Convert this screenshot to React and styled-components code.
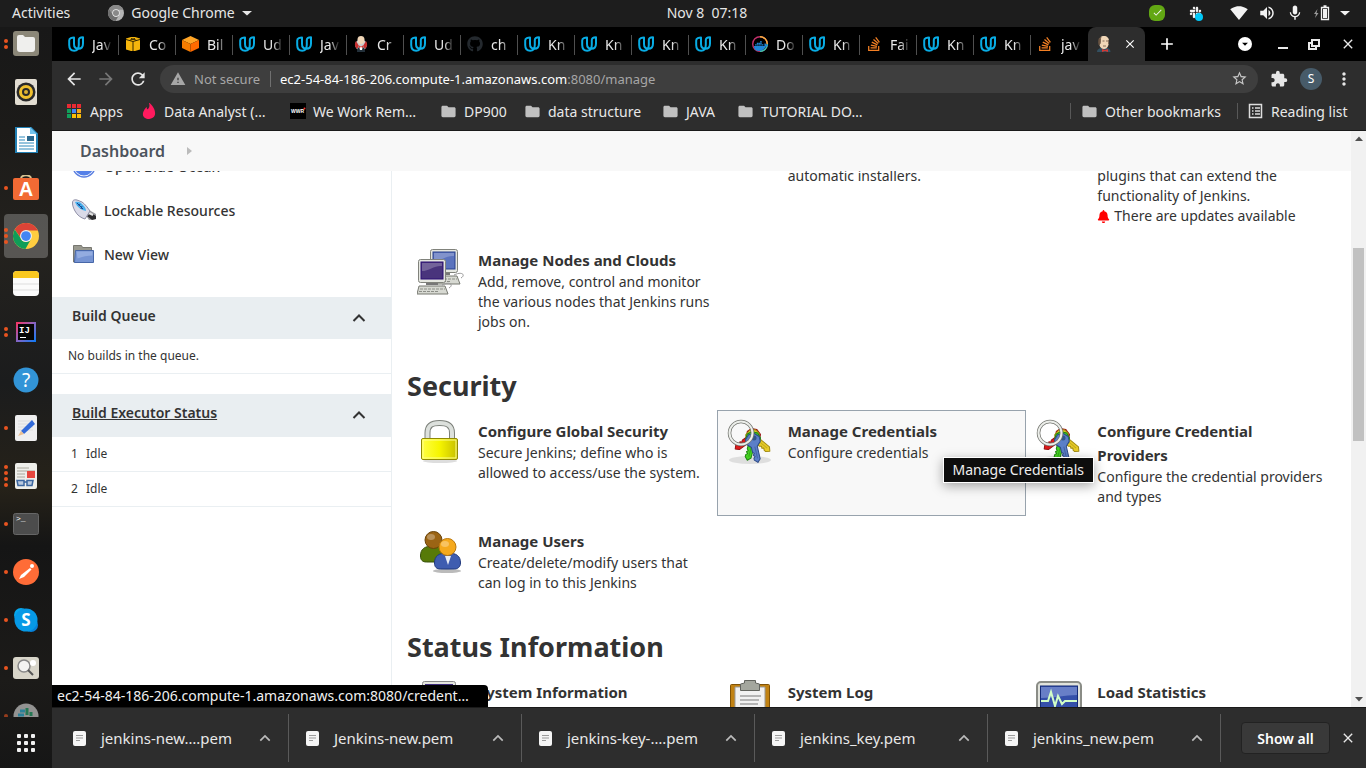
import React from "react";
import styled, { createGlobalStyle, css } from "styled-components";
import { SiTinder } from "react-icons/si";
import { FaGithub, FaDocker, FaStackOverflow, FaSlack, FaBell } from "react-icons/fa";
import {
  MdArrowBack, MdArrowForward, MdRefresh, MdStarBorder, MdExtension, MdMoreVert, MdWarning,
  MdSignalWifi4Bar, MdVolumeUp, MdMic, MdFolder, MdArrowDropDown, MdClose, MdAdd, MdCheck,
} from "react-icons/md";

const Global = createGlobalStyle`
  *, *::before, *::after { box-sizing: border-box; }
  body { margin: 0; background: #1d1d1d; }
  button { font: inherit; color: inherit; background: none; border: 0; padding: 0; }
  a { color: inherit; text-decoration: none; }
  ul { list-style: none; margin: 0; padding: 0; }
  h1, h2, h3, p { margin: 0; }
  svg { display: block; flex: none; }
`;

const Desktop = styled.div`
  display: flex;
  flex-direction: column;
  height: 100vh;
  overflow: hidden;
  font-family: "Noto Sans", "Open Sans", sans-serif;
  font-size: 14px;
  color: #333;
`;

/* ---------- system bar ---------- */
const SystemBar = styled.header`
  display: grid;
  grid-template-columns: 1fr auto 1fr;
  align-items: center;
  flex: none;
  height: 27px;
  padding: 0 16px 2px 64px;
  background: #1d1d1d;
  color: #e6e6e6;
  font-size: 14px;
`;
const SystemMenu = styled.div`
  display: flex;
  align-items: center;
  gap: 38px;
  margin-left: -52px;
`;
const SystemButton = styled.button`
  display: flex;
  align-items: center;
  gap: 7px;
  white-space: nowrap;
`;
const StatusIcons = styled.div`
  display: flex;
  justify-content: flex-end;
  align-items: center;
  gap: 10px;
  color: #f2f2f2;
`;
const SkypeStatus = styled.span`
  display: grid;
  place-items: center;
  width: 16px;
  height: 16px;
  margin-right: 14px;
  border-radius: 6px;
  background: #62a713;
`;
const SlackStatus = styled.span`
  position: relative;
  margin-right: 18px;
  &::after {
    content: "";
    position: absolute;
    right: -1px;
    bottom: -2px;
    width: 8px;
    height: 8px;
    border-radius: 50%;
    background: #00c8f8;
  }
`;

const Body = styled.div`
  display: flex;
  flex: 1;
  min-height: 0;
`;

/* ---------- dock ---------- */
const Dock = styled.nav`
  display: flex;
  flex-direction: column;
  flex: none;
  width: 52px;
  background: linear-gradient(180deg, #181818 0, #1c1b19 14%, #24221e 30%, #1b1c1d 48%, #262219 62%, #151515 70%, #1c1b19 88%, #161616 100%);
`;
const DockList = styled.ul`
  display: flex;
  flex-direction: column;
  align-items: center;
  gap: 4px;
  flex: 1;
  min-height: 0;
  overflow: hidden;
  > :first-child { margin-top: -5px; }
`;
const DockItem = styled.li`
  position: relative;
  display: grid;
  place-items: center;
  flex: none;
  width: 44px;
  height: 44px;
  border-radius: 4px;
  opacity: ${(p) => (p.$faded ? 0.6 : 1)};
  ${(p) => p.$active && css`background: rgba(255, 255, 255, 0.24);`}
`;
const Dots = styled.span`
  position: absolute;
  left: 0;
  top: 0;
  bottom: 0;
  display: flex;
  flex-direction: column;
  justify-content: center;
  gap: 2px;
`;
const Dot = styled.i`
  width: 4px;
  height: 4px;
  border-radius: 50%;
  background: #e95420;
`;
const AppGrid = styled.button`
  display: grid;
  grid-template-columns: repeat(3, 4px);
  justify-content: center;
  align-content: center;
  gap: 3px;
  flex: none;
  height: 51px;
`;
const GridDot = styled.i`
  width: 4px;
  height: 4px;
  border-radius: 1px;
  background: #f0f0f0;
`;

/* ---------- browser ---------- */
const Browser = styled.section`
  display: flex;
  flex-direction: column;
  flex: 1;
  min-width: 0;
  background: #2d2d2d;
  color: #e8e8e8;
`;
const TabStrip = styled.div`
  display: flex;
  flex: none;
  height: 34px;
  padding-left: 10px;
  background: #000;
`;
const Tab = styled.button`
  position: relative;
  display: flex;
  align-items: center;
  gap: 8px;
  flex: none;
  width: 57px;
  padding-left: 6px;
  &::after {
    content: "";
    position: absolute;
    right: 0;
    top: 8px;
    width: 1px;
    height: 20px;
    background: ${(p) => (p.$last ? "transparent" : "#4f4f4f")};
  }
`;
const TabTitle = styled.span`
  width: 20px;
  overflow: hidden;
  white-space: nowrap;
  text-align: left;
  mask-image: linear-gradient(90deg, #000 50%, transparent);
`;
const ActiveTab = styled.div`
  display: flex;
  align-items: center;
  justify-content: space-between;
  flex: none;
  width: 57px;
  padding: 0 8px;
  border-radius: 8px 8px 0 0;
  background: #2d2d2d;
  color: #fff;
`;
const NewTab = styled.button`
  margin-left: 12px;
  color: #fff;
`;
const WindowControls = styled.div`
  display: flex;
  align-items: center;
  gap: 20px;
  margin-left: auto;
  padding-right: 10px;
  color: #e8e8e8;
`;
const TabSearch = styled.button`
  display: grid;
  place-items: center;
  width: 14px;
  height: 14px;
  margin-right: 6px;
  border-radius: 50%;
  background: #fff;
  color: #000;
`;

const Toolbar = styled.div`
  display: flex;
  align-items: center;
  flex: none;
  gap: 12px;
  height: 35px;
  padding: 0 12px;
`;
const ToolButton = styled.button`
  color: ${(p) => (p.$dim ? "#777" : "#e6e6e6")};
`;
const Omnibox = styled.form`
  display: flex;
  align-items: center;
  flex: 1;
  height: 28px;
  padding: 0 10px;
  border-radius: 14px;
  background: #3e3e3e;
  color: #a6a6a6;
  font-size: 13px;
`;
const Security = styled.span`
  width: 77px;
  margin-left: 8px;
  border-right: 1px solid #707070;
  line-height: 16px;
  white-space: nowrap;
`;
const AddressWrap = styled.label`
  position: relative;
  flex: 1;
  display: flex;
  margin-left: 9px;
`;
const Address = styled.input`
  flex: 1;
  min-width: 0;
  border: 0;
  padding: 0;
  outline: 0;
  background: none;
  font: inherit;
  line-height: 20px;
  color: transparent;
`;
const AddressText = styled.span`
  position: absolute;
  inset: 0;
  line-height: 20px;
  white-space: nowrap;
  pointer-events: none;
  b { font-weight: 400; color: #fff; }
`;
const Avatar = styled.button`
  width: 22px;
  height: 22px;
  border-radius: 50%;
  background: #475b69;
  color: #fff;
  font-size: 12px;
  text-align: center;
`;

const Bookmarks = styled.nav`
  display: flex;
  align-items: center;
  flex: none;
  height: 35px;
  padding: 0 14px 4px;
  border-bottom: 1px solid #1b1b1b;
`;
const Bookmark = styled.a`
  display: flex;
  align-items: center;
  gap: 7px;
  flex: none;
  width: ${(p) => p.$width}px;
  white-space: nowrap;
`;
const BookmarkEnd = styled.div`
  display: flex;
  align-items: center;
  margin-left: auto;
`;
const Divider = styled.i`
  width: 1px;
  height: 16px;
  margin-right: 10px;
  background: #585858;
`;

/* ---------- page ---------- */
const PageArea = styled.div`
  position: relative;
  display: flex;
  flex: 1;
  min-height: 0;
  background: #fff;
  color: #333;
`;
const Page = styled.div`
  display: flex;
  flex-direction: column;
  flex: 1;
  min-width: 0;
`;
const Breadcrumbs = styled.nav`
  display: flex;
  align-items: center;
  gap: 22px;
  flex: none;
  height: 40px;
  padding-left: 28px;
  background: #f8f8f8;
  color: #4d545d;
  font-size: 16px;
  font-weight: 600;
`;
const Columns = styled.div`
  display: flex;
  flex: 1;
  min-height: 0;
  overflow: hidden;
`;
const SidePanel = styled.aside`
  flex: none;
  width: 340px;
  border-right: 1px solid #eaeff2;
`;
const Tasks = styled.ul`
  margin-top: -26px;
  padding-bottom: 20px;
`;
const Task = styled.li`
  height: 44px;
  a {
    display: flex;
    align-items: center;
    gap: 8px;
    height: 100%;
    padding: 0 0 2px 20px;
    font-weight: 500;
    font-size: 14px;
  }
`;
const Pane = styled.section`
  margin-bottom: 20px;
  font-size: 12px;
`;
const PaneHeader = styled.header`
  display: flex;
  align-items: center;
  justify-content: space-between;
  height: 42px;
  padding: 0 25px 0 20px;
  background: #e9eef1;
  h2 { padding-bottom: 6px; font-size: 14px; font-weight: 600; }
  a { text-decoration: underline; }
`;
const PaneNote = styled.p`
  padding: 0 16px;
  border-bottom: 1px solid #eaeff2;
  line-height: 34px;
`;
const Executors = styled.table`
  width: 100%;
  border-spacing: 0;
  border-top: 1px solid #e9eef1;
  td {
    padding: 0 0 0 8px;
    border-bottom: 1px solid #eaeff2;
    line-height: 34px;
  }
  td:first-child { width: 26px; padding-left: 19px; }
`;

const Main = styled.main`
  flex: 1;
  min-width: 0;
  padding: 0 15px;
  margin-top: -14px;
`;
const SectionTitle = styled.h1`
  padding: 25px 0 4px;
  font-size: 27px;
  line-height: 40px;
  font-weight: 700;
`;
const Tiles = styled.div`
  display: grid;
  grid-template-columns: repeat(3, minmax(0, 1fr));
  row-gap: 4px;
`;
const Tile = styled.a`
  display: grid;
  grid-template-columns: 48px minmax(0, 1fr);
  grid-column-start: ${(p) => p.$column || "auto"};
  column-gap: 13px;
  align-items: start;
  padding: 8px 9px;
  border: 1px solid ${(p) => (p.$hovered ? "#98a3ad" : "transparent")};
  background: ${(p) => (p.$hovered ? "#f8f8f8" : "transparent")};
`;
const TileBody = styled.div`
  grid-column: 2;
  font-size: 14px;
  line-height: 20px;
  white-space: nowrap;
  h2 { font-size: 15px; line-height: 24px; font-weight: 700; }
`;
const UpdateNote = styled.p`
  display: flex;
  align-items: center;
  gap: 4px;
`;
const Tooltip = styled.div`
  position: absolute;
  right: 272px;
  top: 326px;
  padding: 0 9px;
  border: 1px solid #fff;
  background: #0d0d0d;
  color: #eee;
  line-height: 24px;
  white-space: nowrap;
  box-shadow: 0 3px 12px rgba(0, 0, 0, 0.35);
`;
const LinkStatus = styled.div`
  position: absolute;
  left: 0;
  bottom: 0;
  width: 436px;
  padding-left: 5px;
  border-radius: 0 4px 0 0;
  background: #000;
  color: #f0f0f0;
  line-height: 22px;
  white-space: nowrap;
`;
const Scrollbar = styled.div`
  display: flex;
  flex-direction: column;
  justify-content: space-between;
  align-items: center;
  flex: none;
  width: 15px;
  padding: 5px 0;
  background: #f1f1f1;
`;
const Thumb = styled.i`
  width: 11px;
  height: 34%;
  margin-bottom: 149px;
  background: #c1c1c1;
`;

/* ---------- downloads ---------- */
const Downloads = styled.footer`
  display: flex;
  align-items: center;
  flex: none;
  height: 61px;
  padding: 0 10px 0 4px;
  border-top: 1px solid #1a1a1a;
  font-size: 15px;
`;
const Download = styled.button`
  display: flex;
  align-items: center;
  flex: 0 1 233px;
  height: 48px;
  padding: 0 17px;
  border-right: 1px solid #5a5a5a;
  span { flex: 1; margin-left: 15px; text-align: left; white-space: nowrap; }
`;
const ShowAll = styled.button`
  width: 89px;
  height: 32px;
  margin: 0 10px 0 auto;
  border: 1px solid #222;
  border-radius: 4px;
  background: #393939;
  color: #fff;
  font-size: 14px;
  font-weight: 600;
`;

/* ---------- drawings ---------- */
const Chevron = ({ width = 14, color = "#333", stroke = 2 }) => (
  <svg width={width} height={width} viewBox="0 0 14 14" fill="none" stroke={color} strokeWidth={stroke}>
    <path d="M1.500 10 7 4.500 12.500 10" />
  </svg>
);
const Triangle = ({ down, color = "#505050", width = 8 }) => (
  <svg width={width} height="6" viewBox="0 0 8 6" preserveAspectRatio="none">
    <path d={down ? "M0 1h8L4 5.500z" : "M0 5h8L4 .5z"} fill={color} />
  </svg>
);
const ChromeLogo = ({ size = 26, gray }) => {
  const c = gray ? ["#8a8a8a", "#6f6f6f", "#b5b5b5", "#888"] : ["#db4437", "#0f9d58", "#ffcd40", "#4285f4"];
  return (
    <svg width={size} height={size} viewBox="0 0 48 48">
      <circle cx="24" cy="24" r="24" fill={c[2]} />
      <path d="M3.200 12A24 24 0 0 1 44.800 12L46 14H24a10 10 0 0 0-9 14z" fill={c[0]} />
      <path d="M3.200 12A24 24 0 0 0 23 48l10-18a10 10 0 0 1-18-1z" fill={c[1]} />
      <circle cx="24" cy="24" r="11" fill="#f1f1f1" />
      <circle cx="24" cy="24" r="9" fill={c[3]} />
    </svg>
  );
};
const Udacity = () => (
  <svg width="16" height="16" viewBox="0 0 16 16" fill="none" stroke="#08ace4" strokeWidth="2" strokeLinejoin="round">
    <path d="M6 1.500C4 1.500 1.200 2.500 1.200 4.500V9c0 3.500 2 5.800 5 5.800 3.200 0 4.600-2.600 4.600-6V4c0-1.600 1.700-2.800 4.200-2.800V7.500c0 3.400-2 5.300-4.600 5.300S6 11 6 8z" />
  </svg>
);
const Battery = () => (
  <svg width="16" height="16" viewBox="0 0 16 16">
    <path d="M3.500 4 0 9h2l-1 4 3.500-5h-2z" fill="#9a9a9a" />
    <path d="M7.500 2.500h7v12h-7zM9.500 1h3" fill="none" stroke="#f2f2f2" strokeWidth="1.300" />
    <path d="M9 4h4v9H9z" fill="#f2f2f2" />
  </svg>
);
const AwsBox = () => (
  <svg width="16" height="16" viewBox="0 0 16 16">
    <path d="M1 2.500 6 1h4l5 1.500v11L10 15H6l-5-1.500z" fill="#f5b50c" />
    <path d="M1 3.500 8 5.500l7-2M8 5.500V15M4.500 4.300 10 2.500M11.500 4.300 6 2.500" stroke="#352700" fill="none" />
  </svg>
);
const Cube = () => (
  <svg width="17" height="16" viewBox="0 0 17 16">
    <path d="M8.500 0 17 4 8.500 8 0 4z" fill="#ffa526" />
    <path d="M0 4l8.500 4v8L0 12z" fill="#f57c00" />
    <path d="M17 4 8.500 8v8l8.500-4z" fill="#ff6a00" />
  </svg>
);
const Butler = ({ round }) => (
  <svg width="16" height="16" viewBox="0 0 16 16">
    {round ? (
      <>
        <circle cx="8" cy="9" r="5.800" fill="#c9cdd0" />
        <path d="M3 5a6 6 0 0 0 1 8l2-3zM13 5a6 6 0 0 1-1 8l-2-3z" fill="#c62f2f" />
        <path d="M4 16c0-4 1-5 4-5s4 1 4 5z" fill="#23303a" />
        <path d="M6 10h4l-1 4H7z" fill="#fff" />
        <path d="M4.500 3.500C4.500 1 6 0 8 0s3.500 1 3.500 3.500S10.500 8 8 8 4.500 6 4.500 3.500z" fill="#f0d6b7" />
        <path d="M6 9.500 8 10.500l2-1V12l-2-1-2 1z" fill="#d33833" />
      </>
    ) : (
      <>
        <path d="M1 16c0-3 3-4 4-4h6c2 0 3.500 2 3.500 4z" fill="#335061" />
        <path d="M3 5c0-3 2-5 5-5s5 2 5 5-1 8-5 8-5-4-5-8z" fill="#f0d6b7" />
        <path d="M3 9C2 4 3 2 5 1 4 3 5 5 4 8zM6.500 5h2M10 5h2M7 10h3M12.500 4v4" fill="#6a5443" stroke="#6a5443" strokeWidth=".8" />
        <path d="m6 13 3 1 3-1v3l-3-1-3 1z" fill="#d33833" />
      </>
    )}
  </svg>
);
const DockerIcon = () => (
  <svg width="16" height="16" viewBox="0 0 16 16" fill="none">
    <circle cx="8" cy="8" r="7.300" stroke="#c3306a" strokeWidth="1.400" />
    <path d="M8 .7A7.300 7.300 0 0 1 15.300 8" stroke="#f4b23c" strokeWidth="1.400" />
    <path d="M15.300 8A7.300 7.300 0 0 1 8 15.300" stroke="#35c9a8" strokeWidth="1.400" />
    <FaDocker x="2" y="3" width="12" height="10" color="#1d86d8" />
  </svg>
);
const Restore = () => (
  <svg width="12" height="12" viewBox="0 0 12 12" fill="none" stroke="currentColor" strokeWidth="2">
    <path d="M4 2h7v6H4zM4 5H1v6h7V8" />
  </svg>
);
const Minimize = () => (
  <svg width="10" height="12" viewBox="0 0 10 12"><path d="M0 9h10v2H0z" fill="currentColor" /></svg>
);
const AppsIcon = () => {
  const c = ["#ea2a33", "#ea2a33", "#ea2a33", "#12a05c", "#4285f4", "#f4a61d", "#12a05c", "#fbbc05", "#fbbc05"];
  return (
    <svg width="17" height="14" viewBox="0 0 17 14">
      {c.map((f, i) => <rect key={i} x={1 + (i % 3) * 5} y={Math.floor(i / 3) * 5} width="4" height="4" fill={f} />)}
    </svg>
  );
};
const Wwr = () => (
  <svg width="16" height="16" viewBox="0 0 16 16">
    <rect width="16" height="16" fill="#000" />
    <text x="1" y="10" fontSize="5" fontWeight="700" fontFamily="Liberation Sans" fill="#fff">WWR</text>
    <circle cx="14.500" cy="5.500" r="1" fill="#f33" />
  </svg>
);
const ReadingList = () => (
  <svg width="16" height="16" viewBox="0 0 16 16" fill="none" stroke="#ddd" strokeWidth="1.500">
    <path d="M1.500 1.500h12v13h-12zM4 5h1.500M7 5h5M4 8h1.500M7 8h5M4 11h1.500M7 11h5" />
  </svg>
);
const FileIcon = () => (
  <svg width="13" height="15" viewBox="0 0 13 15">
    <rect width="13" height="15" rx="2" fill="#f5f5f5" />
    <path d="M3 4.500h7M3 7h7M3 9.500h4" stroke="#9b9b9b" />
  </svg>
);

const Ocean = () => (
  <svg width="24" height="24" viewBox="0 0 24 24">
    <circle cx="12" cy="12" r="11" fill="#fff" stroke="#5b7fe0" strokeWidth="1.500" />
    <circle cx="12" cy="12" r="9.500" fill="#5580e8" />
  </svg>
);
const Usb = () => (
  <svg width="24" height="24" viewBox="0 0 24 24">
    <path d="m13 16 4-4 7 4v5l-7 1z" fill="#9a9aa0" />
    <path d="m15 18 4-3 5 3v3l-4 1z" fill="#2d2d30" />
    <path d="m17 15 4 2" stroke="#e4e4e4" strokeWidth="2" />
    <path d="M.5 5C.5 2 2 1.500 5 2l5 2c3 2 6 6 8 9l-5 8c-4-1-8-4-10-8C1.500 10 .5 8 .5 5z" fill="#dadae8" stroke="#8f8fa6" />
    <path d="M3 4c3-1 6 0 8 3 2 2 3 4 3 6-5-1-9-4-11-9z" fill="#48b1ee" />
    <path d="m5 5 6 6M7 8l1-2m1 5 1-3" stroke="#1c438b" fill="none" />
  </svg>
);
const Folder = () => (
  <svg width="24" height="24" viewBox="0 0 24 24">
    <path d="M1.500 20V3.500h8l1 2h9V20z" fill="#99998f" stroke="#777770" />
    <path d="M3.500 8.500h18V20.500h-19z" fill="#7694d3" stroke="#4767a8" />
    <path d="M4.500 9.500h16v4c-5 0-10 1-15 3z" fill="#93ace0" />
  </svg>
);

const Monitor = ({ x, y, screen }) => (
  <g transform={`translate(${x} ${y})`}>
    <path d="M24 26c8-4 12 0 7 3" stroke="#999" fill="none" />
    <path d="M8 22h12v4H8z" fill="#777" />
    <rect x=".5" y=".5" width="27" height="23" rx="2" fill="#e5e7e0" stroke="#80827b" />
    <rect x="3" y="3" width="22" height="17" fill={screen[0]} stroke={screen[1]} />
    <path d="M4 12C11 12 17 6 24 7V4H4z" fill="#fff" opacity=".23" />
    <path d="M1 27h26l3 8H-1z" fill="#d7d9d2" stroke="#777971" />
    <path d="M2 30h25M1 32.500h20" stroke="#8d8f88" strokeDasharray="3 1" />
  </g>
);
const Nodes = () => (
  <svg width="48" height="48" viewBox="0 0 48 48">
    <Monitor x={13} y={1} screen={["#5b73bd", "#29408d"]} />
    <Monitor x={1} y={11} screen={["#49347c", "#2a0d73"]} />
  </svg>
);
const Padlock = () => (
  <svg width="48" height="48" viewBox="0 0 48 48">
    <defs>
      <linearGradient id="brass"><stop stopColor="#ffff45" /><stop offset=".5" stopColor="#f6f500" /><stop offset="1" stopColor="#c7bf00" /></linearGradient>
    </defs>
    <ellipse cx="23" cy="42" rx="17" ry="2" fill="#ddd" />
    <path d="M10.500 22V14C10.500 6 15 4 22.500 4S35 6 35 14V22" fill="none" stroke="#7c807a" strokeWidth="6" />
    <path d="M10.500 22V14C10.500 6 15 4 22.500 4S35 6 35 14V22" fill="none" stroke="#dce0dc" strokeWidth="4" />
    <rect x="4.500" y="19.500" width="36" height="21" rx="1.500" fill="url(#brass)" stroke="#918a00" />
    <rect x="6" y="21" width="33" height="18" fill="none" stroke="#ffff8e" />
  </svg>
);
const Key = ({ angle, y, fill, edge }) => (
  <g transform={`translate(26 ${y}) rotate(${angle})`} fill={fill} stroke={edge}>
    <path d="M-3-7h6l4 4v5l-4 4v13l-3 3-3-3v-2l1.500-1.500L-3 14l1.500-1.500L-3 11V6l-4-4v-5z" strokeLinejoin="round" />
    <path d="M.5 6v12" strokeOpacity=".5" />
  </g>
);
const Keys = () => (
  <svg width="48" height="48" viewBox="0 0 48 48">
    <ellipse cx="23" cy="41" rx="21" ry="4" fill="#000" opacity=".1" />
    <Key angle={54} y={17} fill="#e01b1b" edge="#951010" />
    <Key angle={-50} y={18} fill="#e8cc28" edge="#a28b13" />
    <Key angle={15} y={20} fill="#46d321" edge="#1d8410" />
    <Key angle={-13} y={22} fill="#5b7fc8" edge="#2d4a86" />
    <circle cx="27" cy="19" r="2.500" fill="#30558a" />
    <circle cx="14" cy="14" r="11.500" fill="none" stroke="#73756f" strokeWidth="3.500" />
    <circle cx="14" cy="14" r="11.500" fill="none" stroke="#eceeea" strokeWidth="2" />
  </svg>
);
const Person = ({ x, y, skin, shirt, edge }) => (
  <g transform={`translate(${x} ${y})`}>
    <path d="M.5 25c0-7 4-10 13-10s13 3 13 10c0 4-3 6-6 6h-14c-4 0-6-2-6-6z" fill={shirt} stroke={edge} />
    <circle cx="13.500" cy="9" r="8.500" fill={skin[0]} stroke={skin[1]} />
    <ellipse cx="11" cy="6" rx="4" ry="3" fill="#fff" opacity=".3" />
  </g>
);
const Users = () => (
  <svg width="48" height="48" viewBox="0 0 48 48">
    <ellipse cx="30" cy="42" rx="14" ry="2" fill="#bbb" />
    <Person x={3} y={2} skin={["#9b6414", "#6a430a"]} shirt="#577a08" edge="#37500a" />
    <Person x={17} y={9} skin={["#f5a91d", "#b9770d"]} shirt="#3f5db0" edge="#223a7d" />
    <path d="m28 27 3 9 3-9z" fill="#e9edf5" />
  </svg>
);
const Computer = () => (
  <svg width="48" height="48" viewBox="0 0 48 48">
    <rect x="5.500" y="1.500" width="33" height="30" rx="2" fill="#e4e6df" stroke="#888" />
    <rect x="8" y="4" width="28" height="22" fill="#3d2b7a" />
  </svg>
);
const Clipboard = () => (
  <svg width="48" height="48" viewBox="0 0 48 48">
    <rect x="3.500" y="4.500" width="39" height="41" rx="1" fill="#c18213" stroke="#805205" />
    <path d="M8 7h30v37H8z" fill="#f2f2f2" stroke="#999" />
    <path d="M17.500 3V.5h11V3l4 1v6.500h-19V4z" fill="#a4a79e" stroke="#63655f" />
    <path d="M13 16h21M13 20h19M13 24h18" stroke="#b5b5b5" strokeWidth="2" />
  </svg>
);
const Statistics = () => (
  <svg width="48" height="48" viewBox="0 0 48 48">
    <rect x="1" y="2" width="44" height="40" rx="4" fill="#e1e3dc" stroke="#8a8c86" strokeWidth="2" />
    <rect x="4.500" y="6" width="37" height="32" fill="#3550aa" stroke="#152b76" />
    <path d="M5 7h36v8C28 15 20 18 5 18z" fill="#8b9edb" opacity=".6" />
    <path d="M5 21h7l3-9 4 14 3-10 4 8 3-3h12" fill="none" stroke="#d2ffc7" strokeWidth="2" />
  </svg>
);

const Svg = ({ children }) => <svg width="26" height="26" viewBox="0 0 26 26">{children}</svg>;
const dockApps = [
  { name: "Files", dots: 2, icon: <Svg><rect width="26" height="25" rx="3" fill="#8b8778" /><path d="M4 6q0-2 2-2h4l2 2h8q2 0 2 2v10q0 3-3 3H7q-3 0-3-3z" fill="#efefed" /></Svg> },
  { name: "Rhythmbox", icon: <Svg><rect x="2" width="22" height="26" rx="2" fill="#e2ddd2" /><circle cx="13" cy="13" r="9.500" fill="#292929" /><circle cx="13" cy="13" r="5.500" fill="none" stroke="#f0c02d" strokeWidth="3" /><circle cx="13" cy="13" r="2" fill="#ddb132" /></Svg> },
  { name: "Writer", icon: <Svg><path d="M3 0h14l7 7v19H3z" fill="#fff" stroke="#2281b5" strokeWidth="2" /><path d="M17 0v7h7" fill="#74c4ed" /><path d="M6 10h6M6 13h6M6 16h15M6 19h15M6 22h15" stroke="#2a88bc" /><path d="M14 9h7v5h-7z" fill="#2b698f" /></Svg> },
  { name: "Software", dots: 1, icon: <Svg><path d="M8 4c0-5 10-5 10 0" fill="none" stroke="#d8c391" strokeWidth="2" /><rect y="3" width="26" height="22" rx="2" fill="#f26a34" /><text x="13" y="21" textAnchor="middle" fontSize="20" fontWeight="700" fontFamily="Liberation Sans" fill="#fff">A</text></Svg> },
  { name: "Chrome", dots: 3, active: true, icon: <ChromeLogo /> },
  { name: "Notes", icon: <Svg><rect width="26" height="25" rx="4" fill="#fbfbfb" /><path d="M0 7V4q0-4 4-4h18q4 0 4 4v3z" fill="#fac820" /><path d="M0 13h26M0 19h26" stroke="#ddd" /></Svg> },
  { name: "IntelliJ", dots: 2, icon: <Svg><defs><linearGradient id="ij" x2="1" y2="1"><stop stopColor="#fe315d" /><stop offset=".45" stopColor="#9162bd" /><stop offset="1" stopColor="#087cfa" /></linearGradient></defs><rect x="3" y="3" width="20" height="20" fill="url(#ij)" /><rect x="5" y="5" width="16" height="16" fill="#050505" /><text x="6" y="14" fontSize="9" fontWeight="700" fontFamily="Liberation Mono" fill="#fff">IJ</text><path d="M7 18.500h6" stroke="#fff" /></Svg> },
  { name: "Help", icon: <Svg><circle cx="13" cy="13" r="12.500" fill="#3294d7" /><text x="13" y="20" textAnchor="middle" fontSize="19" fontFamily="Noto Sans" fill="#fff">?</text></Svg> },
  { name: "Editor", dots: 1, icon: <Svg><rect x="2" width="22" height="26" rx="2" fill="#efefef" /><path d="M5 6h15M5 9h15M5 12h15M5 15h15" stroke="#ddd" /><path d="m8 16 11-11 3 4L11 19z" fill="#326ad9" /><path d="m5 21 3-5 3 3z" fill="#eac092" /></Svg> },
  { name: "Documents", dots: 4, icon: <Svg><rect x="2" width="22" height="26" rx="2" fill="#efefea" /><path d="M4 5h12M4 8h18M4 11h8M4 14h8" stroke="#aaa89c" /><path d="M14 8h8v7h-8z" fill="#e6473e" /><path d="M4 17.500h7v5H5zM14 17.500h6l-1 5h-5zM11 19h3" fill="#b9c9df" stroke="#3c67a0" strokeWidth="1.500" /></Svg> },
  { name: "Terminal", dots: 1, icon: <Svg><rect x=".5" y="2.500" width="25" height="21" rx="2" fill="#4c4c4c" stroke="#666" /><text x="3" y="10" fontSize="8" fontFamily="Liberation Mono" fill="#fff">&gt;_</text></Svg> },
  { name: "Postman", dots: 1, icon: <Svg><circle cx="13" cy="13" r="13" fill="#ff6c37" /><path d="m6 20 2-4 9-7 1.500 1.500L11 18z" fill="#fff" /><circle cx="19" cy="7" r="2" fill="#fff" /></Svg> },
  { name: "Skype", dots: 1, icon: <Svg><circle cx="8" cy="8" r="7" fill="#06a7ec" /><circle cx="18" cy="18" r="7" fill="#0680d9" /><circle cx="13" cy="13" r="11.500" fill="#0699e6" /><text x="13" y="19" textAnchor="middle" fontSize="17" fontWeight="700" fontFamily="Open Sans" fill="#fff">S</text></Svg> },
  { name: "Image viewer", dots: 1, icon: <Svg><rect y="2" width="26" height="22" rx="3" fill="#d8d5c9" /><circle cx="11" cy="11" r="6" fill="#f4f4f2" stroke="#888" strokeWidth="1.500" /><path d="m15 15 5 5" stroke="#555" strokeWidth="2" /><circle cx="20" cy="8" r="3" fill="#fff" /></Svg> },
  { name: "Slack", dots: 1, faded: true, icon: <Svg><circle cx="13" cy="13" r="12.500" fill="#e4e4e4" /><path d="M7 8h5M5 12h6" stroke="#36c5f0" strokeWidth="3" /><path d="M14 5v7M18 9v4" stroke="#2eb67d" strokeWidth="3" /></Svg> },
];

const udacity = <Udacity />;
const overflow = <FaStackOverflow size={16} color="#f48024" />;
const tabs = [
  ["Jav", udacity], ["Co", <AwsBox />], ["Bil", <Cube />], ["Ud", udacity], ["Jav", udacity], ["Cr", <Butler round />],
  ["Ud", udacity], ["ch", <FaGithub size={16} color="#24292e" />], ["Kn", udacity], ["Kn", udacity], ["Kn", udacity],
  ["Kn", udacity], ["Do", <DockerIcon />], ["Kn", udacity], ["Fai", overflow], ["Kn", udacity], ["Kn", udacity], ["jav", overflow],
];
const folder = <MdFolder size={17} color="#c0c0c0" />;
const bookmarks = [
  ["Apps", 75, <AppsIcon />], ["Data Analyst (…", 149, <SiTinder size={16} color="#ff1a5e" />], ["We Work Rem…", 150, <Wwr />],
  ["DP900", 84, folder], ["data structure", 138, folder], ["JAVA", 75, folder], ["TUTORIAL DO…", 140, folder],
];
const downloads = ["jenkins-new….pem", "Jenkins-new.pem", "jenkins-key-….pem", "jenkins_key.pem", "jenkins_new.pem"];

const ManageTile = ({ icon, title, children, ...rest }) => (
  <Tile href="#" {...rest}>
    {icon}
    <TileBody><h2>{title}</h2>{children}</TileBody>
  </Tile>
);

export default function App() {
  return (
    <>
      <Global />
      <Desktop>
        <SystemBar>
          <SystemMenu>
            <SystemButton>Activities</SystemButton>
            <SystemButton><ChromeLogo size={16} gray />Google Chrome<Triangle down width={10} color="#e6e6e6" /></SystemButton>
          </SystemMenu>
          <span>Nov 8&nbsp; 07:18</span>
          <StatusIcons>
            <SkypeStatus><MdCheck size={11} /></SkypeStatus>
            <SlackStatus><FaSlack size={13} /></SlackStatus>
            <MdSignalWifi4Bar size={18} />
            <MdVolumeUp size={18} />
            <MdMic size={18} />
            <Battery />
            <Triangle down width={10} color="#f2f2f2" />
          </StatusIcons>
        </SystemBar>

        <Body>
          <Dock aria-label="Dock">
            <DockList>
              {dockApps.map((app) => (
                <DockItem key={app.name} $active={app.active} $faded={app.faded}>
                  <Dots>{Array.from({ length: app.dots || 0 }, (_, i) => <Dot key={i} />)}</Dots>
                  {app.icon}
                </DockItem>
              ))}
            </DockList>
            <AppGrid aria-label="Show applications">
              {Array.from({ length: 9 }, (_, i) => <GridDot key={i} />)}
            </AppGrid>
          </Dock>

          <Browser>
            <TabStrip>
              {tabs.map(([title, icon], i) => (
                <Tab key={i} $last={i === tabs.length - 1}>{icon}<TabTitle>{title}</TabTitle></Tab>
              ))}
              <ActiveTab><Butler /><MdClose size={14} /></ActiveTab>
              <NewTab aria-label="New tab"><MdAdd size={20} /></NewTab>
              <WindowControls>
                <TabSearch aria-label="Search tabs"><MdArrowDropDown size={14} /></TabSearch>
                <button aria-label="Minimize"><Minimize /></button>
                <button aria-label="Restore"><Restore /></button>
                <button aria-label="Close"><MdClose size={16} /></button>
              </WindowControls>
            </TabStrip>

            <Toolbar>
              <ToolButton aria-label="Back"><MdArrowBack size={20} /></ToolButton>
              <ToolButton aria-label="Forward" $dim><MdArrowForward size={20} /></ToolButton>
              <ToolButton aria-label="Reload"><MdRefresh size={20} /></ToolButton>
              <Omnibox>
                <MdWarning size={16} />
                <Security>Not secure</Security>
                <AddressWrap>
                  <Address aria-label="Address" readOnly />
                  <AddressText><b>ec2-54-84-186-206.compute-1.amazonaws.com</b>:8080/manage</AddressText>
                </AddressWrap>
                <MdStarBorder size={17} color="#c8c8c8" />
              </Omnibox>
              <ToolButton aria-label="Extensions"><MdExtension size={18} /></ToolButton>
              <Avatar>S</Avatar>
              <ToolButton aria-label="Menu"><MdMoreVert size={20} /></ToolButton>
            </Toolbar>

            <Bookmarks>
              {bookmarks.map(([label, width, icon]) => (
                <Bookmark key={label} href="#" $width={width}>{icon}{label}</Bookmark>
              ))}
              <BookmarkEnd>
                <Divider />
                <Bookmark href="#" $width={156}>{folder}Other bookmarks</Bookmark>
                <Divider />
                <Bookmark href="#" $width={104}><ReadingList />Reading list</Bookmark>
              </BookmarkEnd>
            </Bookmarks>

            <PageArea>
              <Page>
                <Breadcrumbs>
                  <a href="#">Dashboard</a>
                  <svg width="5" height="8" viewBox="0 0 5 8"><path d="M0 0v8l5-4z" fill="#bbb" /></svg>
                </Breadcrumbs>
                <Columns>
                  <SidePanel>
                    <Tasks>
                      <Task><a href="#"><Ocean />Open Blue Ocean</a></Task>
                      <Task><a href="#"><Usb />Lockable Resources</a></Task>
                      <Task><a href="#"><Folder />New View</a></Task>
                    </Tasks>
                    <Pane>
                      <PaneHeader><h2>Build Queue</h2><button aria-label="Collapse"><Chevron /></button></PaneHeader>
                      <PaneNote>No builds in the queue.</PaneNote>
                    </Pane>
                    <Pane>
                      <PaneHeader><h2><a href="#">Build Executor Status</a></h2><button aria-label="Collapse"><Chevron /></button></PaneHeader>
                      <Executors>
                        <tbody>
                          <tr><td>1</td><td>Idle</td></tr>
                          <tr><td>2</td><td>Idle</td></tr>
                        </tbody>
                      </Executors>
                    </Pane>
                  </SidePanel>

                  <Main>
                    <Tiles>
                      <Tile href="#" $column={2}><TileBody>automatic installers.</TileBody></Tile>
                      <Tile href="#">
                        <TileBody>
                          <p>plugins that can extend the<br />functionality of Jenkins.</p>
                          <UpdateNote><FaBell size={13} color="#f00" />There are updates available</UpdateNote>
                        </TileBody>
                      </Tile>
                      <ManageTile icon={<Nodes />} title="Manage Nodes and Clouds" $column={1}>Add, remove, control and monitor<br />the various nodes that Jenkins runs<br />jobs on.</ManageTile>
                    </Tiles>

                    <SectionTitle>Security</SectionTitle>
                    <Tiles>
                      <ManageTile icon={<Padlock />} title="Configure Global Security">Secure Jenkins; define who is<br />allowed to access/use the system.</ManageTile>
                      <ManageTile icon={<Keys />} title="Manage Credentials" $hovered>Configure credentials</ManageTile>
                      <ManageTile icon={<Keys />} title={<>Configure Credential<br />Providers</>}>Configure the credential providers<br />and types</ManageTile>
                      <ManageTile icon={<Users />} title="Manage Users">Create/delete/modify users that<br />can log in to this Jenkins</ManageTile>
                    </Tiles>

                    <SectionTitle>Status Information</SectionTitle>
                    <Tiles>
                      <ManageTile icon={<Computer />} title="System Information" />
                      <ManageTile icon={<Clipboard />} title="System Log" />
                      <ManageTile icon={<Statistics />} title="Load Statistics" />
                    </Tiles>
                  </Main>
                </Columns>
              </Page>
              <Scrollbar><Triangle /><Thumb /><Triangle down /></Scrollbar>
              <Tooltip role="tooltip">Manage Credentials</Tooltip>
              <LinkStatus>ec2-54-84-186-206.compute-1.amazonaws.com:8080/credent…</LinkStatus>
            </PageArea>

            <Downloads>
              {downloads.map((file) => (
                <Download key={file}><FileIcon /><span>{file}</span><Chevron width={12} color="#bbb" /></Download>
              ))}
              <ShowAll>Show all</ShowAll>
              <button aria-label="Close downloads"><MdClose size={16} /></button>
            </Downloads>
          </Browser>
        </Body>
      </Desktop>
    </>
  );
}
